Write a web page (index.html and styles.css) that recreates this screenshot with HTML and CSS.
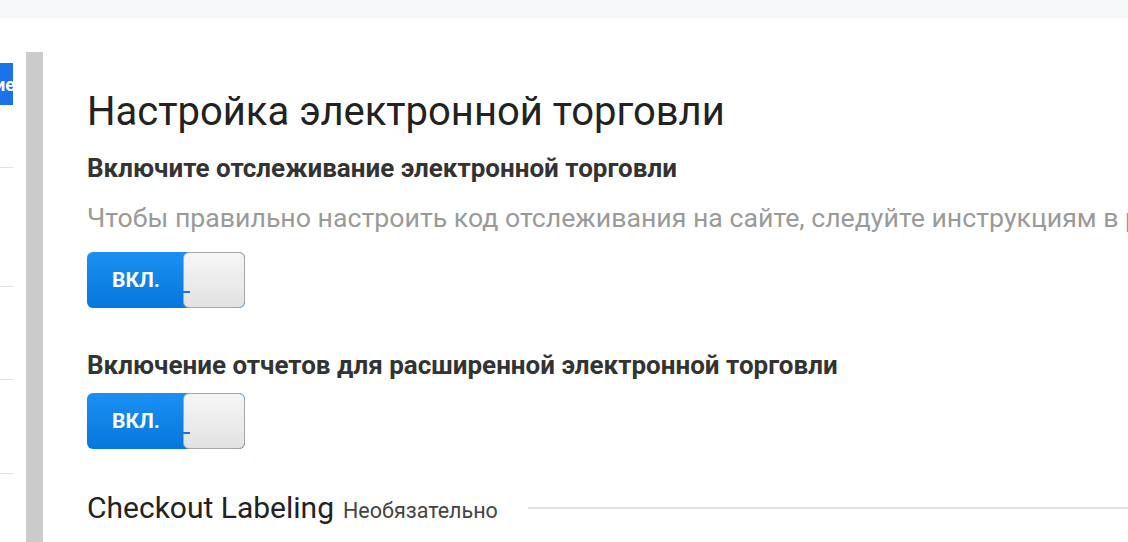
FILE: index.html
```html
<!DOCTYPE html>
<html lang="ru">

<head>
  <meta charset="UTF-8">
  <meta name="viewport" content="width=device-width, initial-scale=1.0">
  <title>Настройка электронной торговли</title>
  <link rel="stylesheet" href="styles.css">
</head>

<body>
  <div class="topbar"></div>

  <div class="layout">
    <div class="sidebar">
      <div class="side-btn"><span>Сохранение</span></div>
      <div class="side-item side-item-1"></div>
      <div class="side-item side-item-2"></div>
      <div class="side-item side-item-3"></div>
      <div class="side-item side-item-4"></div>
    </div>

    <div class="divider"></div>

    <div class="content">
      <h1 class="page-title">Настройка электронной торговли</h1>

      <h2 class="field-title">Включите отслеживание электронной торговли</h2>
      <p class="hint">Чтобы правильно настроить код отслеживания на сайте, следуйте инструкциям в руководстве.</p>
      <div class="toggle">
        <span class="toggle-on">ВКЛ.</span>
        <span class="toggle-knob"></span>
        <span class="toggle-mark"></span>
      </div>

      <h2 class="field-title field-title-2">Включение отчетов для расширенной электронной торговли</h2>
      <div class="toggle">
        <span class="toggle-on">ВКЛ.</span>
        <span class="toggle-knob"></span>
        <span class="toggle-mark"></span>
      </div>

      <div class="section-row">
        <h3 class="section-title">Checkout Labeling</h3>
        <span class="optional">Необязательно</span>
        <span class="section-line"></span>
      </div>
    </div>
  </div>
</body>

</html>
```

FILE: styles.css
```css
body {
  margin: 0;
  font-family: Roboto, "Noto Sans", Arial, sans-serif;
  background-color: #fff;
  overflow: hidden;
  height: 542px;
}
.topbar {
  height: 18px;
  background-color: #f7f8f9;
}
.layout {
  display: flex;
  height: 524px;
}
.sidebar {
  width: 13px;
  flex-shrink: 0;
  padding-top: 45px;
}
.side-btn {
  height: 42px;
  background-color: #1a73e8;
  display: flex;
  justify-content: flex-end;
  align-items: center;
  overflow: hidden;
  color: white;
  font-weight: bold;
  font-size: 18px;
  white-space: nowrap;
}
.side-btn span {
  margin-right: -2px;
}
.side-item {
  border-bottom: 1px solid #e3e3e3;
}
.side-item-1 {
  height: 62px;
}
.side-item-2 {
  height: 118px;
}
.side-item-3 {
  height: 92px;
}
.side-item-4 {
  height: 93px;
}
.divider {
  width: 17px;
  flex-shrink: 0;
  margin-left: 13px;
  margin-top: 34px;
  background-color: #cbcbcb;
}
.content {
  flex: 1;
  min-width: 0;
  padding-top: 71px;
  padding-left: 44px;
  overflow: hidden;
}
.page-title {
  margin: 0;
  font-size: 40px;
  line-height: 46px;
  font-weight: normal;
  color: #222;
}
.field-title {
  margin: 18px 0 0;
  font-size: 26px;
  line-height: 30px;
  font-weight: bold;
  color: #333;
}
.field-title-2 {
  margin-top: 42px;
  margin-bottom: 13px;
}
.hint {
  margin: 20px 0 19px;
  font-size: 26.7px;
  line-height: 30px;
  color: #9a9a9a;
  white-space: nowrap;
}
.toggle {
  position: relative;
  width: 158px;
  height: 56px;
  border-radius: 6px;
  overflow: hidden;
  background: linear-gradient(#1b90f3, #0677dc);
}
.toggle-on {
  display: flex;
  align-items: center;
  justify-content: center;
  width: 98px;
  height: 56px;
  color: white;
  font-weight: bold;
  font-size: 21px;
}
.toggle-mark {
  position: absolute;
  left: 96px;
  top: 39px;
  width: 7px;
  height: 2px;
  background-color: #1a73e8;
}
.toggle-knob {
  position: absolute;
  right: 0;
  top: 0;
  width: 60px;
  height: 54px;
  border: 1px solid #a8a8a8;
  border-radius: 6px;
  background: linear-gradient(#f6f6f6, #e2e2e2);
}
.section-row {
  display: flex;
  align-items: baseline;
  margin-top: 42px;
}
.section-title {
  margin: 0;
  font-size: 30px;
  line-height: 34px;
  font-weight: normal;
  color: #222;
}
.optional {
  margin-left: 9px;
  font-size: 21.5px;
  color: #444;
}
.section-line {
  flex: 1;
  margin-left: 30px;
  border-top: 2px solid #e0e0e0;
  align-self: center;
}
```
